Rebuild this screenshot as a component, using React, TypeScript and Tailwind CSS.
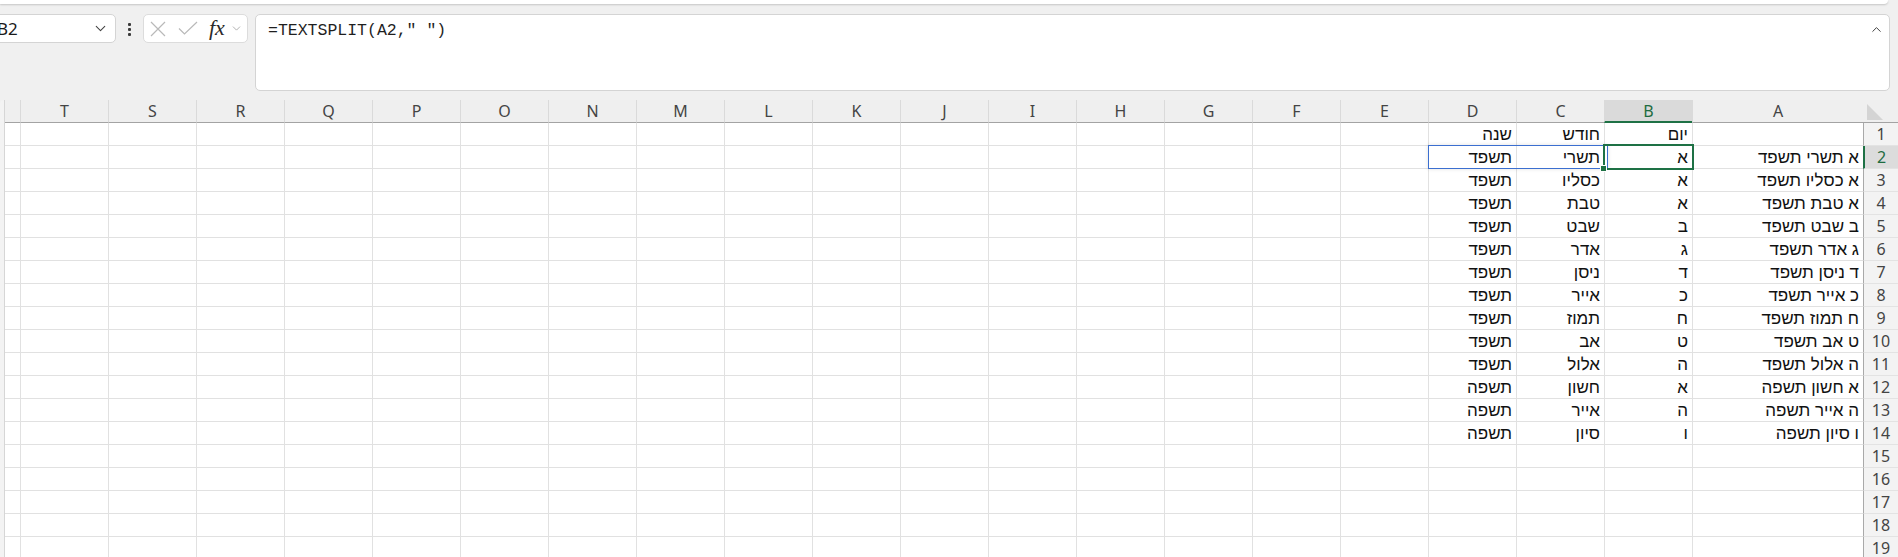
import { ChevronDown, ChevronUp } from "lucide-react";

const COLS = ["A", "B", "C", "D", "E", "F", "G", "H", "I", "J", "K", "L", "M", "N", "O", "P", "Q", "R", "S", "T"];

// A, B, C, D
const DATA: string[][] = [
  ["", "יום", "חודש", "שנה"],
  ["א תשרי תשפד", "א", "תשרי", "תשפד"],
  ["א כסליו תשפד", "א", "כסליו", "תשפד"],
  ["א טבת תשפד", "א", "טבת", "תשפד"],
  ["ב שבט תשפד", "ב", "שבט", "תשפד"],
  ["ג אדר תשפד", "ג", "אדר", "תשפד"],
  ["ד ניסן תשפד", "ד", "ניסן", "תשפד"],
  ["כ אייר תשפד", "כ", "אייר", "תשפד"],
  ["ח תמוז תשפד", "ח", "תמוז", "תשפד"],
  ["ט אב תשפד", "ט", "אב", "תשפד"],
  ["ה אלול תשפד", "ה", "אלול", "תשפד"],
  ["א חשון תשפה", "א", "חשון", "תשפה"],
  ["ה אייר תשפה", "ה", "אייר", "תשפה"],
  ["ו סיון תשפה", "ו", "סיון", "תשפה"],
];

const ROW_COUNT = 19;

function Toolbar() {
  return (
    <>
      {/* strip of the ribbon above */}
      <div className="h-[4px] mr-[10px] bg-white rounded-br-[6px] shadow-[0_1px_2px_rgba(0,0,0,0.18)]" />

      <div className="flex items-start mt-[10px] h-[77px]">
        {/* name box */}
        <div className="-ml-[7px] w-[123px] h-[29px] bg-white border border-[#d4d4d4] rounded-[5px] flex items-center pl-[3px] pr-[6px]">
          <span className="flex-1 text-[17px] text-[#1a1a1a] font-['Noto_Sans',sans-serif] leading-none">B2</span>
          <ChevronDown size={17} strokeWidth={1.5} className="text-[#444]" />
        </div>

        {/* more handle */}
        <div className="ml-[12px] mt-[9px] flex flex-col gap-[2px]">
          <span className="w-[3px] h-[3px] bg-[#3b3b3b] rounded-[1px]" />
          <span className="w-[3px] h-[3px] bg-[#3b3b3b] rounded-[1px]" />
          <span className="w-[3px] h-[3px] bg-[#3b3b3b] rounded-[1px]" />
        </div>

        {/* cancel / enter / insert function */}
        <div className="ml-[12px] w-[105px] h-[29px] bg-white border border-[#dcdcdc] rounded-[5px] flex items-center pl-[6px]">
          <svg width="16" height="16" viewBox="0 0 16 16" fill="none" stroke="#b9b9b9" strokeWidth="1.2">
            <path d="M1 1 15 15M15 1 1 15" />
          </svg>
          <svg width="20" height="15" viewBox="0 0 20 15" fill="none" stroke="#b9b9b9" strokeWidth="1.2" className="ml-[12px]">
            <path d="M1 7.5 6.5 13 19 1" />
          </svg>
          <span className="ml-[11px] text-[22px] italic text-[#2a2a2a] font-['Liberation_Serif',serif] leading-none -mt-[2px]">fx</span>
          <ChevronDown size={13} strokeWidth={1.4} className="ml-[5px] text-[#9a9a9a]" />
        </div>

        {/* formula bar */}
        <div className="ml-[7px] w-[1635px] h-[77px] bg-white border border-[#d4d4d4] rounded-[5px] relative">
          <div className="pl-[12px] pt-[4px] text-[16.5px] text-[#1f1f1f] font-['Liberation_Mono',monospace] whitespace-pre">
            {'=TEXTSPLIT(A2," ")'}
          </div>
          <ChevronUp size={15} strokeWidth={1.5} className="absolute right-[5px] top-[7px] text-[#333]" />
        </div>
      </div>
    </>
  );
}

function HeaderRow() {
  return (
    <div dir="rtl" className="flex h-[23px]">
      {/* select-all corner */}
      <div className="w-[35px] h-full bg-[#efefef] border-b border-[#a3a3a3] relative">
        <svg width="16" height="16" viewBox="0 0 16 16" className="absolute left-[4px] top-[4px]">
          <path d="M0 0 L16 16 L0 16 Z" fill="#d4d4d4" />
        </svg>
      </div>
      {COLS.map((c, i) => {
        const sel = c === "B";
        return (
          <div
            key={c}
            className={`${i === 0 ? "w-[171px]" : "w-[88px]"} h-full border-l border-[#dadada] flex items-center justify-center text-[16px] font-['Noto_Sans',sans-serif] ${
              sel
                ? "bg-[#dadada] text-[#1e6c41] border-b-2 border-b-[#1e7145]"
                : "bg-[#efefef] text-[#444] border-b border-b-[#a3a3a3]"
            }`}
          >
            {c}
          </div>
        );
      })}
      <div className="w-[15px] h-full bg-[#efefef] border-b border-[#a3a3a3]" />
    </div>
  );
}

function BodyRow({ n }: { n: number }) {
  const vals = DATA[n - 1] ?? [];
  const active = n === 2;
  return (
    <div dir="rtl" className="flex h-[23px]">
      <div
        className={`w-[35px] h-full border-b border-[#e3e3e3] flex items-end justify-center pb-[1px] text-[16px] leading-[20px] font-['Noto_Sans',sans-serif] ${
          active
            ? "bg-[#dcdcdc] text-[#1e6c41] border-l-2 border-l-[#1e7145]"
            : "bg-[#f3f3f3] text-[#444] border-l border-l-[#a9a9a9]"
        }`}
      >
        {n}
      </div>
      {COLS.map((c, i) => (
        <div
          key={c}
          className={`${i === 0 ? "w-[171px]" : "w-[88px]"} h-full bg-white border-l border-b border-[#e1e1e1] flex items-end pr-[4px] pb-[1px] overflow-hidden whitespace-nowrap text-[17px] leading-[19px] text-[#111] font-['Liberation_Sans','DejaVu_Sans',sans-serif]`}
        >
          {vals[i] ?? ""}
        </div>
      ))}
      <div className="w-[15px] h-full bg-white border-b border-[#e1e1e1]" />
    </div>
  );
}

export default function App() {
  return (
    <div className="w-[1898px] h-[557px] overflow-hidden bg-[#f0f0f0] relative">
      <Toolbar />

      <div className="mt-[9px] flex">
        {/* slim scroll gutter on the far left */}
        <div className="w-[5px] bg-[#f3f3f3] border-r border-[#d6d6d6] rounded-tl-[4px] h-[460px]" />
        <div className="flex-1">
          <HeaderRow />
          {Array.from({ length: ROW_COUNT }, (_, k) => (
            <BodyRow key={k} n={k + 1} />
          ))}
        </div>
      </div>

      {/* spilled range outline */}
      <div className="absolute left-[1428px] top-[145px] w-[180px] h-[24px] border border-[#3b6fd0] shadow-[0_0_4px_rgba(0,0,0,0.12)] pointer-events-none" />
      {/* active cell B2 */}
      <div className="absolute left-[1603px] top-[144px] w-[91px] h-[26px] border-2 border-[#1e7145] pointer-events-none" />
      {/* fill handle */}
      <div className="absolute left-[1600px] top-[165px] w-[7px] h-[7px] bg-[#1e7145] border border-white pointer-events-none" />
    </div>
  );
}
